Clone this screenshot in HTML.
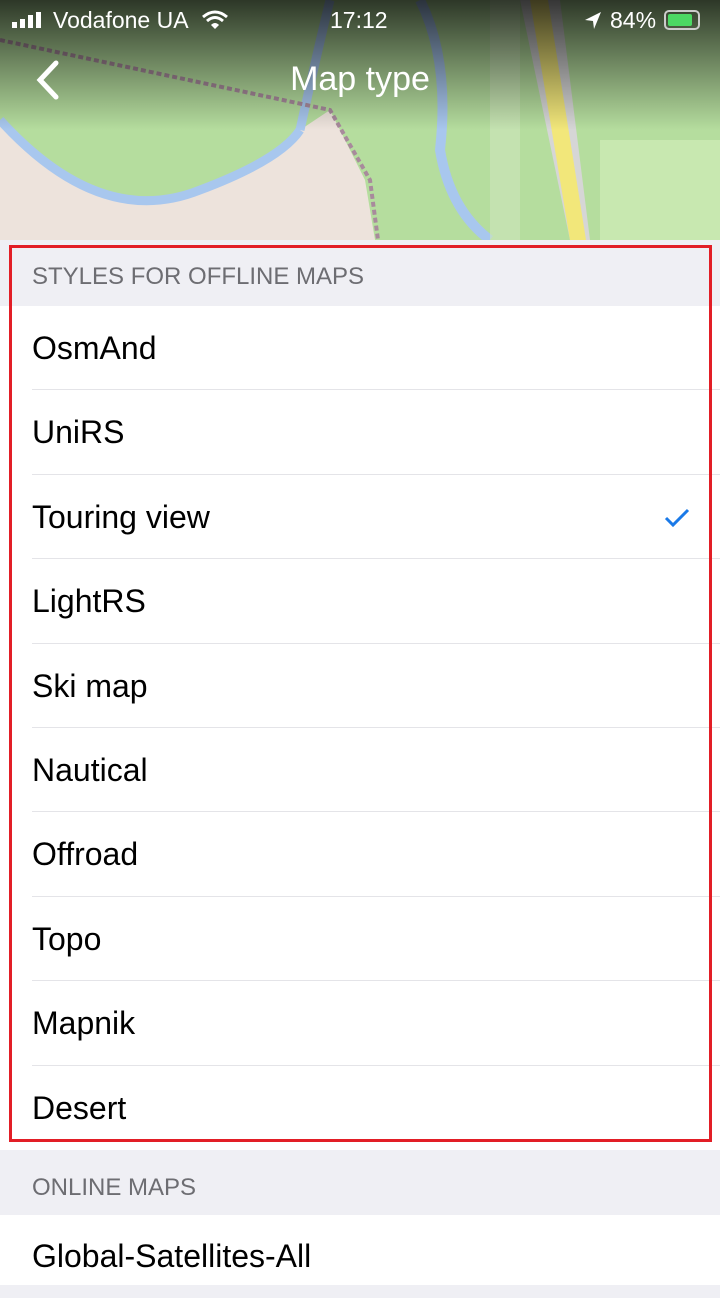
<!DOCTYPE html>
<html><head><meta charset="utf-8"><style>
*{margin:0;padding:0;box-sizing:border-box}
body{width:720px;height:1280px;overflow:hidden;background:#efeff4;font-family:"Liberation Sans",sans-serif;position:relative}
.map{position:absolute;left:0;top:0;width:720px;height:240px}
.sb{position:absolute;top:0;left:0;width:720px;height:40px;color:#fff;font-size:23px}
.title{position:absolute;top:60px;width:720px;text-align:center;color:#fff;font-size:34px}
.hdr{position:absolute;left:0;width:720px;color:#6d6d72;font-size:24px;padding-left:32px}
.list{position:absolute;left:0;width:720px;background:#fff}
.row{height:84.4px;position:relative;font-size:32px;color:#000;line-height:84px;padding-left:32px}
.row:after{content:"";position:absolute;left:32px;right:0;bottom:0;height:1px;background:#e4e4e8}
.row:last-child:after{display:none}
.red{position:absolute;left:9px;top:245px;width:703px;height:897px;border:3px solid #e21e26}
</style></head><body>
<svg class="map" viewBox="0 0 720 240">
<rect width="720" height="240" fill="#b5dd9e"/>
<path d="M0 120 Q100 230 200 190 Q280 160 300 130 L330 110 L365 180 L375 240 L0 240Z" fill="#ede3dc"/>
<path d="M0 120 Q100 230 200 190 Q280 160 300 130" fill="none" stroke="#a8c7ee" stroke-width="9"/>
<path d="M300 130 Q320 40 330 0" fill="none" stroke="#a8c7ee" stroke-width="9"/>
<path d="M420 0 Q450 60 440 150 Q450 210 490 240" fill="none" stroke="#a8c7ee" stroke-width="10"/>
<path d="M0 40 L330 110 L370 180 L378 240" fill="none" stroke="#a88a9c" stroke-width="4" stroke-dasharray="5 3"/>
<path d="M520 0 L560 0 L590 240 L570 240Z" fill="#d6d6d6"/>
<path d="M530 0 L548 0 L586 240 L570 240Z" fill="#f2e77a"/>
<rect x="490" y="0" width="30" height="240" fill="#cfe6bd" opacity=".6"/>
<rect x="600" y="140" width="120" height="100" fill="#c8e8b0"/>
<rect width="720" height="130" fill="url(#g)"/>
<defs><linearGradient id="g" x1="0" y1="0" x2="0" y2="1"><stop offset="0" stop-color="#000" stop-opacity=".75"/><stop offset="1" stop-color="#000" stop-opacity="0"/></linearGradient></defs>
</svg>
<div class="sb">
<svg style="position:absolute;left:12px;top:12px" width="34" height="16"><rect x="0" y="10" width="5" height="6" fill="#fff"/><rect x="8" y="7" width="5" height="9" fill="#fff"/><rect x="16" y="3" width="5" height="13" fill="#fff"/><rect x="24" y="0" width="5" height="16" fill="#fff"/></svg>
<span style="position:absolute;left:53px;top:7px">Vodafone UA</span>
<svg style="position:absolute;left:202px;top:10px" width="26" height="20" viewBox="0 0 26 20"><path d="M1 7 Q13 -3 25 7" stroke="#fff" stroke-width="3" fill="none"/><path d="M5 11 Q13 4 21 11" stroke="#fff" stroke-width="3" fill="none"/><path d="M9 15 Q13 11 17 15 L13 19Z" fill="#fff"/></svg>
<span style="position:absolute;left:330px;top:7px">17:12</span>
<svg style="position:absolute;left:583px;top:11px" width="20" height="20" viewBox="0 0 20 20"><path d="M18 1 L2 9 L10 10 L11 18Z" fill="#fff"/></svg>
<span style="position:absolute;left:610px;top:7px">84%</span>
<div style="position:absolute;left:664px;top:10px;width:36px;height:20px;border:2px solid #ccc;border-radius:5px;padding:2px"><div style="width:24px;height:12px;background:#4cd964;border-radius:2px"></div></div>
</div>
<svg style="position:absolute;left:34px;top:60px" width="26" height="40" viewBox="0 0 26 40"><path d="M22 3 L6 20 L22 37" stroke="#fff" stroke-width="5" fill="none" stroke-linecap="round"/></svg>
<div class="title">Map type</div>
<div class="hdr" style="top:248px;height:58px;line-height:58px">STYLES FOR OFFLINE MAPS</div>
<div class="list" style="top:306px">
<div class="row">OsmAnd</div><div class="row">UniRS</div>
<div class="row">Touring view<svg style="position:absolute;right:30px;top:33px" width="26" height="20" viewBox="0 0 26 20"><path d="M2 10 L9 17 L24 2" stroke="#1a7ae8" stroke-width="3" fill="none"/></svg></div>
<div class="row">LightRS</div><div class="row">Ski map</div><div class="row">Nautical</div><div class="row">Offroad</div><div class="row">Topo</div><div class="row">Mapnik</div><div class="row">Desert</div>
</div>
<div class="hdr" style="top:1160px;height:55px;line-height:55px">ONLINE MAPS</div>
<div class="list" style="top:1215px;height:70px"><div class="row" style="line-height:84px;margin-top:-1px">Global-Satellites-All</div></div>
<div class="red"></div>
</body></html>
